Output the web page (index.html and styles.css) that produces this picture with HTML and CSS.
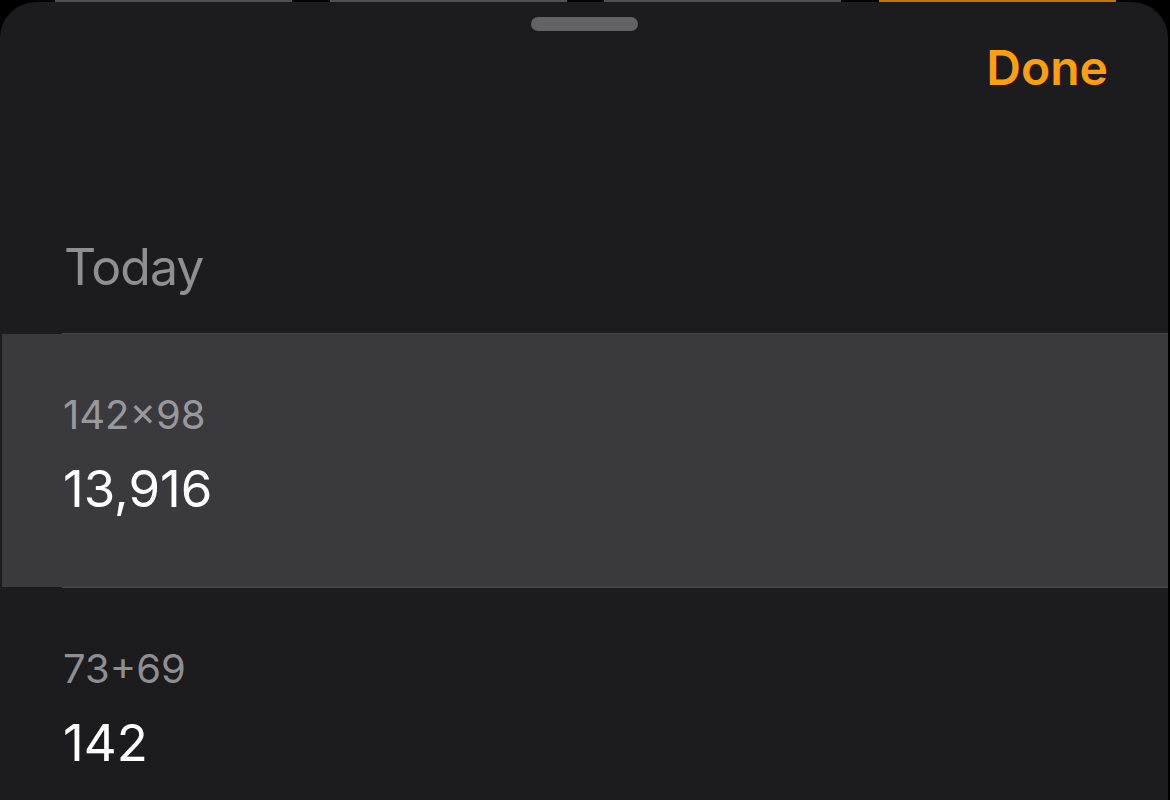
FILE: index.html
```html
<!DOCTYPE html>
<html>
<head>
    <title>History</title>
    <link rel="stylesheet" href="styles.css">
</head>
<body>
    <div class="keys-behind">
        <div class="key"></div>
        <div class="key"></div>
        <div class="key"></div>
        <div class="key key-op"></div>
    </div>
    <div class="sheet">
        <div class="grabber"></div>
        <div class="toolbar">
            <button class="done-btn">Done</button>
        </div>
        <h2 class="section-title">Today</h2>
        <div class="history-list">
            <div class="separator"></div>
            <div class="entry selected">
                <div class="expr">142×98</div>
                <div class="result">13,916</div>
            </div>
            <div class="separator"></div>
            <div class="entry">
                <div class="expr">73+69</div>
                <div class="result">142</div>
            </div>
        </div>
    </div>
</body>
</html>
```

FILE: styles.css
```css
body {
    margin: 0;
    background-color: #000;
    font-family: Inter, "Noto Sans", sans-serif;
    height: 800px;
    overflow: hidden;
}
.keys-behind {
    display: flex;
    gap: 37.5px;
    padding-left: 55px;
    height: 2px;
    overflow: hidden;
}
.key {
    width: 237px;
    height: 2px;
    background-color: #505052;
}
.key-op {
    background-color: #c27609;
}
.sheet {
    width: 1168px;
    height: 798px;
    background-color: #1c1c1e;
    border-radius: 36px 36px 0 0;
    overflow: hidden;
}
.grabber {
    width: 107px;
    height: 14px;
    margin: 15px auto 0;
    background-color: #636366;
    border-radius: 7px;
}
.toolbar {
    display: flex;
    justify-content: flex-end;
    margin-top: 8px;
    padding-right: 60px;
}
.done-btn {
    background: none;
    border: none;
    padding: 0;
    font-family: inherit;
    font-size: 48px;
    line-height: 58px;
    font-weight: 600;
    color: #ff9f0a;
    cursor: pointer;
}
.section-title {
    margin: 139px 0 0;
    padding: 0 0 34px 64px;
    font-size: 50px;
    line-height: 63px;
    letter-spacing: -1px;
    font-weight: 400;
    color: #8e8e93;
}
.separator {
    height: 1px;
    margin-left: 62px;
    background-color: #48484a;
}
.entry {
    margin-left: 2px;
    padding: 57px 0 67px 61px;
}
.entry.selected {
    background-color: #3a393e;
}
.expr {
    font-size: 40px;
    line-height: 48px;
    color: #8e8e93;
}
.selected .expr {
    color: #99989d;
}
.result {
    margin-top: 19px;
    font-size: 51px;
    line-height: 62px;
    color: #fff;
}
```
